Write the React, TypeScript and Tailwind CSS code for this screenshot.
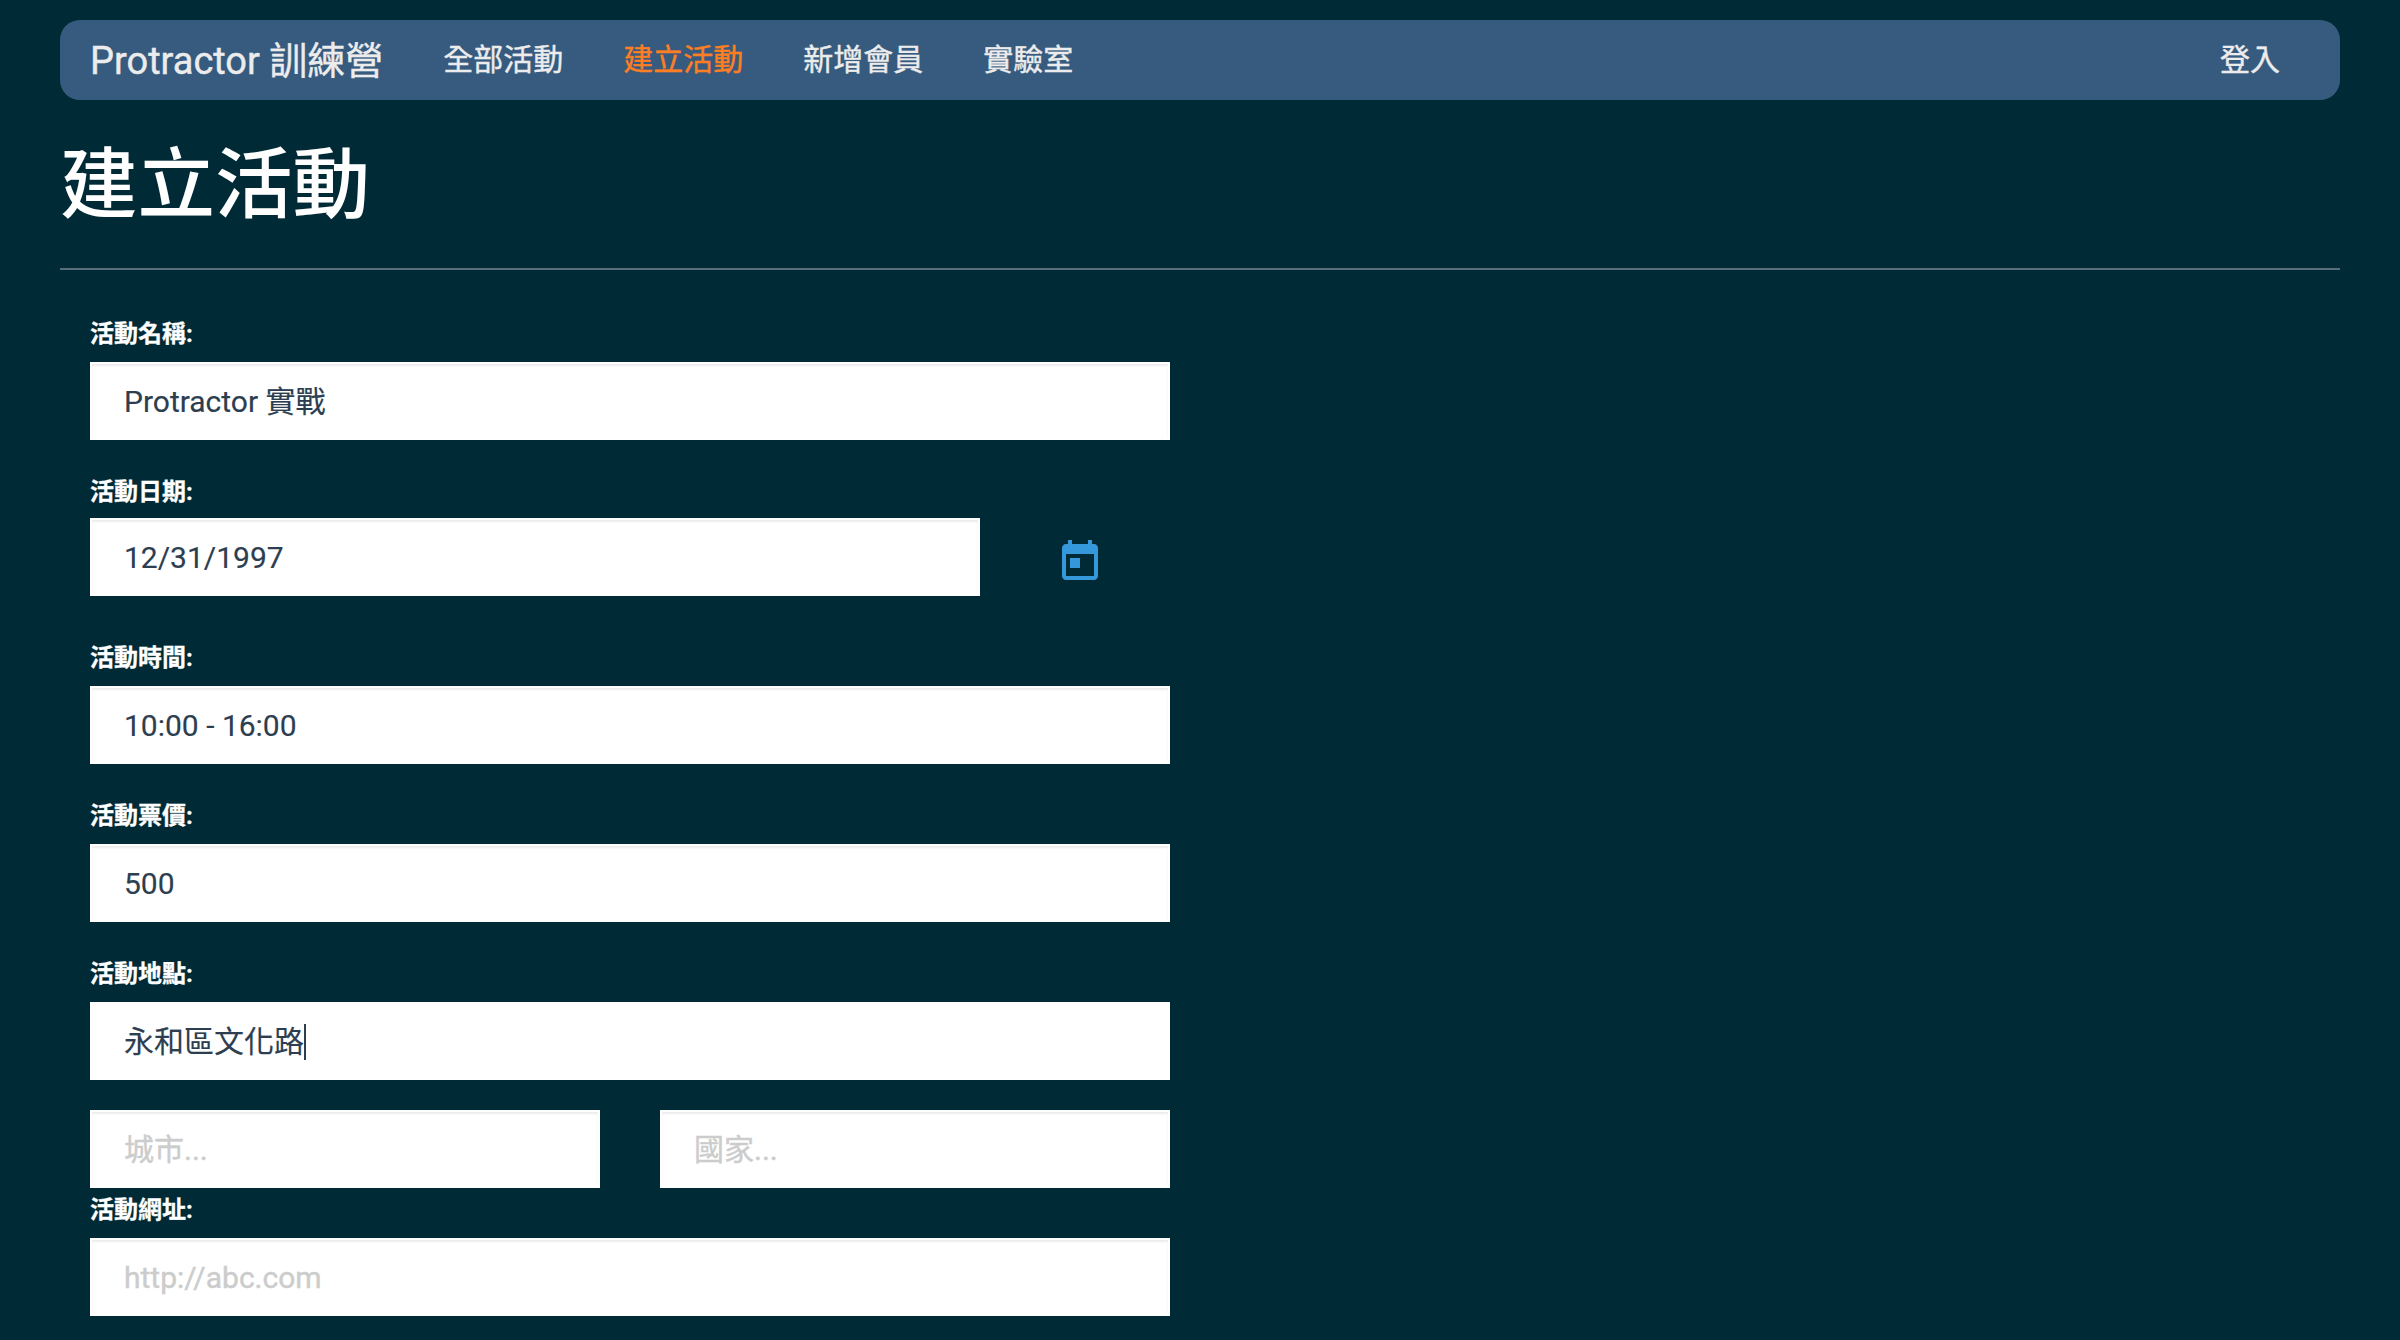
const sans = "font-['Roboto','Noto_Sans_CJK_TC',sans-serif]";

function Field({ value, placeholder, caret, className }: { value?: string; placeholder?: string; caret?: boolean; className?: string }) {
  const shadow = caret ? "" : "shadow-[inset_0_2px_2px_rgba(0,0,0,0.075)]";
  return (
    <div className={`flex h-[78px] items-center border-2 border-white bg-white px-8 text-[30px] ${shadow} ${className ?? ""}`}>
      {value && <span className="text-[#2c3e50] [-webkit-text-stroke:0.15px]">{value}</span>}
      {placeholder && <span className="text-[#cccccc] [-webkit-text-stroke:0.4px]">{placeholder}</span>}
      {caret && <span className="mt-[2px] h-9 w-[2px] bg-[#2c3e50]" />}
    </div>
  );
}

function Label({ children, className }: { children: string; className?: string }) {
  return <div className={`h-6 text-2xl leading-6 font-bold [-webkit-text-stroke:0.3px] ${className ?? ""}`}>{children}</div>;
}

export default function App() {
  return (
    <div className={`h-[1340px] overflow-hidden bg-[#002b36] px-[60px] pt-5 text-white ${sans}`}>
      <nav className="flex h-20 items-center rounded-[20px] bg-[#375a7f] px-[30px] text-[30px] text-[#ececec] [-webkit-text-stroke:0.4px]">
        <span className="mt-[2px] mr-[60px] text-[38px]">Protractor 訓練營</span>
        <div className="-mt-[2px] flex gap-[60px]">
          <span>全部活動</span>
          <span className="text-[#fd7e23]">建立活動</span>
          <span>新增會員</span>
          <span>實驗室</span>
        </div>
        <span className="-mt-[2px] mr-[30px] ml-auto">登入</span>
      </nav>
      <h1 className="mt-[36px] h-[100px] text-[77.5px] leading-[100px] font-medium">建立活動</h1>
      <hr className="mt-[32px] border-t-2 border-[#586e7b]" />
      <form className="ml-[30px] w-[1080px] pt-[52px]">
        <Label>活動名稱:</Label>
        <Field className="mt-[16px]" value="Protractor 實戰" />
        <Label className="mt-[40px]">活動日期:</Label>
        <div className="mt-[14px] flex items-start">
          <Field className="w-[890px]" value="12/31/1997" />
          <svg className="mt-5 ml-[76px] size-12" viewBox="0 0 24 24" fill="#3498db"><path d="M19 3h-1V1h-2v2H8V1H6v2H5c-1.1 0-2 .9-2 2v14c0 1.1.9 2 2 2h14c1.1 0 2-.9 2-2V5c0-1.1-.9-2-2-2zm0 16H5V8h14v11zM7 10h5v5H7z" /></svg>
        </div>
        <Label className="mt-[50px]">活動時間:</Label>
        <Field className="mt-[16px]" value="10:00 - 16:00" />
        <Label className="mt-[40px]">活動票價:</Label>
        <Field className="mt-[16px]" value="500" />
        <Label className="mt-[40px]">活動地點:</Label>
        <Field className="mt-[16px]" value="永和區文化路" caret />
        <div className="mt-[30px] grid grid-cols-2 gap-[60px]">
          <Field placeholder="城市..." />
          <Field placeholder="國家..." />
        </div>
        <Label className="mt-[10px]">活動網址:</Label>
        <Field className="mt-[16px]" placeholder="http://abc.com" />
      </form>
    </div>
  );
}
